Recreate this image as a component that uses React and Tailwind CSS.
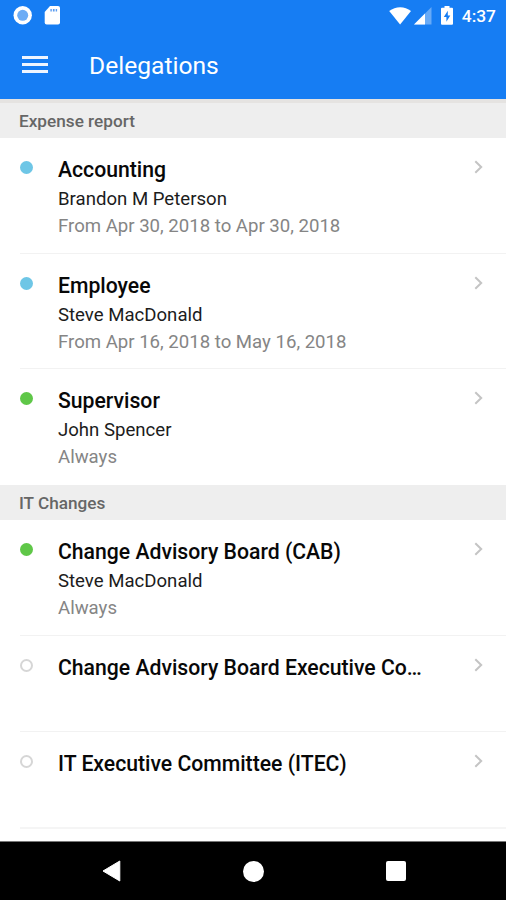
const sections = [
    {
        title: 'Expense report',
        items: [
            { title: 'Accounting', name: 'Brandon M Peterson', period: 'From Apr 30, 2018 to Apr 30, 2018', status: 'upcoming', height: 'h-[116px]' },
            { title: 'Employee', name: 'Steve MacDonald', period: 'From Apr 16, 2018 to May 16, 2018', status: 'upcoming', height: 'h-[115px]' },
            { title: 'Supervisor', name: 'John Spencer', period: 'Always', status: 'active', height: 'h-[116px]' }
        ]
    },
    {
        title: 'IT Changes',
        items: [
            { title: 'Change Advisory Board (CAB)', name: 'Steve MacDonald', period: 'Always', status: 'active', height: 'h-[116px]' },
            { title: 'Change Advisory Board Executive Co…', status: 'none', height: 'h-[96px]' },
            { title: 'IT Executive Committee (ITEC)', status: 'none', height: 'h-[95px]' }
        ]
    }
];

const dotStyles = {
    upcoming: 'bg-[#6ec6e6]',
    active: 'bg-[#5fc748]',
    none: 'border-2 border-[#d6d6d6]'
};

const StatusBar = () => (
    <div className="h-8 flex items-center pl-[13px] pr-[10px] text-white">
        <svg className="w-5 h-5 shrink-0" viewBox="0 0 20 20">
            <circle cx="9.7" cy="9.3" r="9.2" fill="#fff" />
            <circle cx="9.7" cy="9.3" r="5.5" fill="#6cacf5" />
        </svg>
        <svg className="w-4 h-5 ml-[11px] shrink-0" viewBox="0 0 16 20">
            <path d="M6 0h8a2 2 0 0 1 2 2v14.6a2 2 0 0 1-2 2H2.7a2 2 0 0 1-2-2V6z" fill="#fff" />
            <path d="M6.4 3h1.4v2.4H6.4zM8.9 3h1.7v2.4H8.9zM11.7 3h1.4v2.4h-1.4z" fill="#5a9cf0" />
        </svg>
        <svg className="w-[22px] h-[18px] ml-auto mb-px shrink-0" viewBox="0 0 22 18">
            <path d="M0.2 4C6.6-1.1 15.8-1.1 22 4L11.1 17.6z" fill="#fff" />
        </svg>
        <svg className="w-[18px] h-[18px] ml-[3px] shrink-0" viewBox="0 0 18 18">
            <path d="M17.5 0v17.5H0z" fill="#fff" opacity="0.35" />
            <path d="M11 6.5v11H0z" fill="#fff" />
        </svg>
        <svg className="w-3 h-[19px] ml-[9px] mb-[2px] shrink-0" viewBox="0 0 12 19">
            <path d="M3.5 0h5v1.8H11a1 1 0 0 1 1 1v14.9a1 1 0 0 1-1 1H1a1 1 0 0 1-1-1V2.8a1 1 0 0 1 1-1h2.5z" fill="#fff" />
            <path d="M6.8 4.8L2.8 11h2.6v4.8L9.3 9.6H6.8z" fill="#167df3" />
        </svg>
        <span className="ml-[9px] text-[17.4px] leading-8 font-medium">4:37</span>
    </div>
);

const AppBar = () => (
    <div className="h-[67px] flex items-center pl-[22px] text-white">
        <div className="w-[26px] mb-[2px] flex flex-col gap-[4px]">
            <span className="h-[3px] bg-[#eef5ff]"></span>
            <span className="h-[3px] bg-[#eef5ff]"></span>
            <span className="h-[3px] bg-[#eef5ff]"></span>
        </div>
        <h1 className="ml-[41px] text-[24.6px] leading-8">Delegations</h1>
    </div>
);

const DelegationRow = ({ item }) => (
    <li className={`flex ml-5 border-b border-[#f2f2f2] last:border-b-0 ${item.height}`}>
        <span className={`w-[13px] h-[13px] mt-[22.5px] rounded-full shrink-0 ${dotStyles[item.status]}`}></span>
        <div className="ml-[25px] pt-[17px] w-[380px] shrink-0">
            <h3 className="h-[30px] text-[21.2px] leading-[29px] font-medium text-[#080808] whitespace-nowrap">{item.title}</h3>
            <p className="text-[18.6px] leading-[28px] text-[#1c1c1c]">{item.name}</p>
            <p className="text-[18.6px] leading-[27px] text-[#858585]">{item.period}</p>
        </div>
        <svg className="w-[9px] h-[14px] ml-auto mr-[23px] mt-[22px]" viewBox="0 0 9 14" fill="none" stroke="#c4c4c4" strokeWidth="2">
            <path d="M1.3 1.2L7.2 7l-5.9 5.8" />
        </svg>
    </li>
);

const NavBar = () => (
    <div className="h-[59px] shrink-0 bg-black border-t border-[#777] grid grid-cols-[182px_142px_182px] items-center">
        <svg className="w-[19px] h-[22px] ml-[102px]" viewBox="0 0 19 22">
            <path d="M17.8 1v20L1 11z" fill="#fff" stroke="#fff" strokeLinejoin="round" />
        </svg>
        <span className="w-[21px] h-[21px] rounded-full bg-white justify-self-center"></span>
        <span className="w-5 h-5 rounded-[2px] bg-white ml-[62px]"></span>
    </div>
);

const App = () => {
    return (
        <div className="w-[506px] h-[900px] flex flex-col overflow-hidden bg-white font-[Roboto,sans-serif]">
            <header className="bg-[#167df3] shrink-0">
                <StatusBar />
                <AppBar />
            </header>
            <main className="flex-1 overflow-hidden">
                {sections.map((section, index) => (
                    <section key={section.title}>
                        <h2 className={`flex items-center pl-[19px] bg-[#eeeeee] text-[17.2px] font-medium text-[#666] ${index === 0 ? 'h-[39px] pt-[2px] border-t-4 border-[#e5e3e1]' : 'h-[35px] pt-[3px]'}`}>
                            {section.title}
                        </h2>
                        <ul>
                            {section.items.map((item) => (
                                <DelegationRow key={item.title} item={item} />
                            ))}
                        </ul>
                    </section>
                ))}
                <div className="ml-5 border-t-2 border-[#f5f5f5]"></div>
            </main>
            <NavBar />
        </div>
    );
};

export default App;
